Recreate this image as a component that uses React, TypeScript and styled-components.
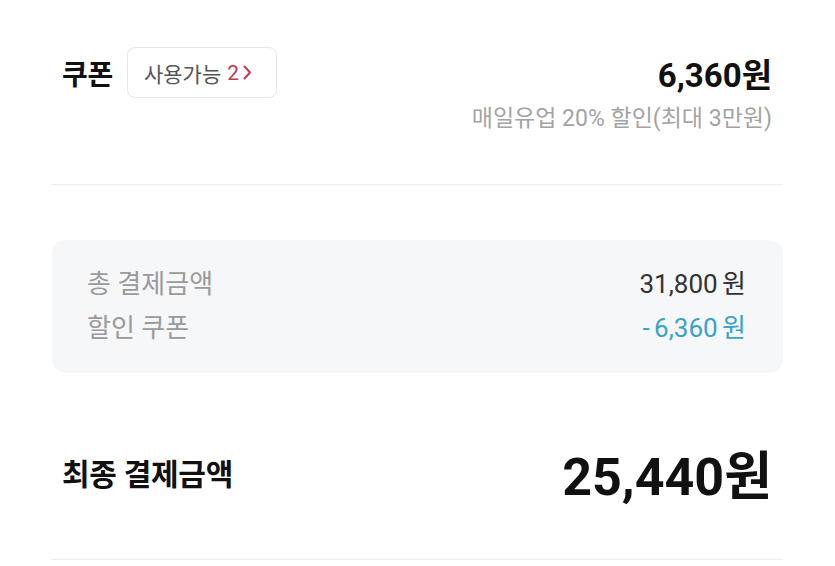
import styled, { createGlobalStyle } from 'styled-components';

const GlobalStyle = createGlobalStyle`
  html, body {
    margin: 0;
    padding: 0;
    background: #ffffff;
  }
  body {
    font-family: Roboto, 'Noto Sans CJK KR', 'Noto Sans', sans-serif;
    color: #111111;
  }
`;

const Page = styled.div`
  width: 835px;
  box-sizing: border-box;
  padding: 47px 52px 0;
`;

const CouponSection = styled.section`
  padding: 0 11px 51px 10px;
  border-bottom: 1px solid #ececec;
`;

const Row = styled.div<{ $height?: number }>`
  display: flex;
  justify-content: space-between;
  align-items: center;
  height: ${({ $height }) => ($height ? `${$height}px` : 'auto')};
`;

const TitleGroup = styled.div`
  display: flex;
  align-items: center;
`;

const Title = styled.h2<{ $size: number }>`
  margin: 0;
  font-size: ${({ $size }) => $size}px;
  font-weight: 700;
  letter-spacing: -0.3px;
  color: #111111;
`;

const Badge = styled.button`
  display: inline-flex;
  align-items: center;
  height: 51px;
  margin-left: 14px;
  padding: 0 24px 0 16px;
  box-sizing: border-box;
  border: 1px solid #e6e6e6;
  border-radius: 8px;
  background: #ffffff;
  font-family: inherit;
  font-size: 21px;
  color: #555555;
  cursor: pointer;
`;

const BadgeCount = styled.span`
  display: inline-flex;
  align-items: center;
  gap: 4px;
  margin-left: 6px;
  color: #c13a50;
`;

const Amount = styled.span<{ $size: number }>`
  font-size: ${({ $size }) => $size}px;
  font-weight: 700;
  color: #111111;
`;

const Note = styled.p`
  margin: 7px 0 0;
  text-align: right;
  font-size: 23px;
  line-height: 28px;
  color: #a3a3a3;
`;

const SummaryCard = styled.div`
  margin-top: 55px;
  padding: 19px 37px 26px 35px;
  border-radius: 14px;
  background: #f6f7f9;
`;

const SummaryRow = styled.div`
  display: flex;
  justify-content: space-between;
  align-items: center;
  height: 44px;
  font-size: 26px;
`;

const SummaryLabel = styled.span`
  color: #9a9a9a;
`;

const SummaryValue = styled.span<{ $accent?: boolean }>`
  color: ${({ $accent }) => ($accent ? '#3aa2cb' : '#333333')};
  word-spacing: -2px;
`;

const TotalSection = styled.section`
  margin-top: 69px;
  padding: 0 11px 57px 10px;
  border-bottom: 1px solid #ececec;
`;

const Chevron = () => (
  <svg width="9" height="15" viewBox="0 0 9 15" fill="none">
    <path d="M1.5 1.5L7 7.5L1.5 13.5" stroke="#c13a50" strokeWidth="2" strokeLinecap="round" strokeLinejoin="round" />
  </svg>
);

export default function App() {
  return (
    <>
      <GlobalStyle />
      <Page>
        <CouponSection>
          <Row $height={51}>
            <TitleGroup>
              <Title $size={28}>쿠폰</Title>
              <Badge>
                사용가능
                <BadgeCount>
                  2
                  <Chevron />
                </BadgeCount>
              </Badge>
            </TitleGroup>
            <Amount $size={33}>6,360원</Amount>
          </Row>
          <Note>매일유업 20% 할인(최대 3만원)</Note>
        </CouponSection>

        <SummaryCard>
          <SummaryRow>
            <SummaryLabel>총 결제금액</SummaryLabel>
            <SummaryValue>31,800 원</SummaryValue>
          </SummaryRow>
          <SummaryRow>
            <SummaryLabel>할인 쿠폰</SummaryLabel>
            <SummaryValue $accent>- 6,360 원</SummaryValue>
          </SummaryRow>
        </SummaryCard>

        <TotalSection>
          <Row $height={60}>
            <Title $size={30}>최종 결제금액</Title>
            <Amount $size={52}>25,440원</Amount>
          </Row>
        </TotalSection>
      </Page>
    </>
  );
}
